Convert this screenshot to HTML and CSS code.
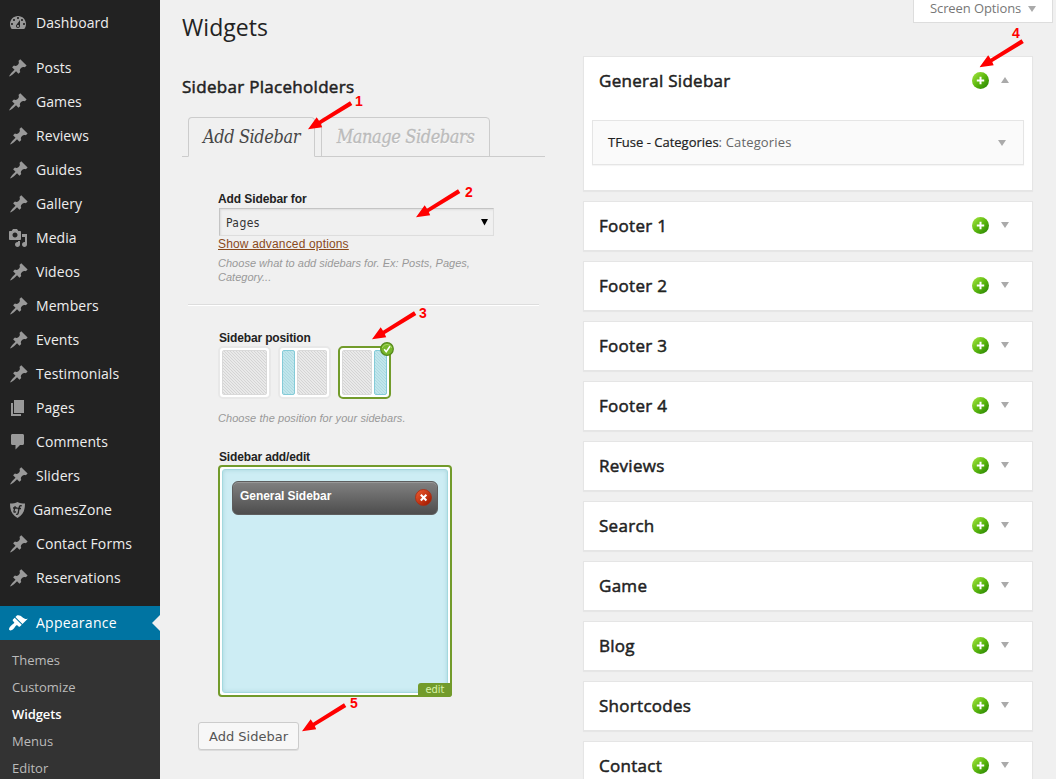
FILE: index.html
```html
<!DOCTYPE html>
<html lang="en">
<head>
<meta charset="utf-8">
<title>Widgets</title>
<link rel="stylesheet" href="styles.css">
</head>
<body>
<svg class="defs" width="0" height="0">
  <defs>
    <symbol id="pin" viewBox="0 0 20 20"><path d="M10.44 3.02l1.82-1.82 6.36 6.35-1.83 1.82c-1.05-.68-2.48-.57-3.41.36l-.75.75c-.92.93-1.04 2.35-.35 3.41l-1.83 1.82-2.41-2.41-2.8 2.79c-.42.42-3.38 2.71-3.8 2.29s1.86-3.39 2.28-3.81l2.79-2.79L4.1 9.36l1.83-1.82c1.05.69 2.48.57 3.4-.36l.75-.75c.93-.92 1.05-2.35.36-3.41z"/></symbol>
    <symbol id="dash" viewBox="0 0 20 20"><path fill-rule="evenodd" d="M3.76 16h12.48c1.1-1.37 1.76-3.11 1.76-5 0-4.42-3.58-8-8-8s-8 3.58-8 8c0 1.89.66 3.63 1.76 5zM10 4c.55 0 1 .45 1 1s-.45 1-1 1-1-.45-1-1 .45-1 1-1zM6 6c.55 0 1 .45 1 1s-.45 1-1 1-1-.45-1-1 .45-1 1-1zm8 0c.55 0 1 .45 1 1s-.45 1-1 1-1-.45-1-1 .45-1 1-1zm-5.37 5.55L12 7v6c0 1.1-.9 2-2 2s-2-.9-2-2c0-.57.24-1.08.63-1.45zM4 10c.55 0 1 .45 1 1s-.45 1-1 1-1-.45-1-1 .45-1 1-1zm12 0c.55 0 1 .45 1 1s-.45 1-1 1-1-.45-1-1 .45-1 1-1zm-5 3c0-.55-.45-1-1-1s-1 .45-1 1 .45 1 1 1 1-.45 1-1z"/></symbol>
    <symbol id="media" viewBox="0 0 20 20"><path fill-rule="evenodd" d="M13 11V4c0-.55-.45-1-1-1h-1.67L9 1H5L3.67 3H2c-.55 0-1 .45-1 1v7c0 .55.45 1 1 1h10c.55 0 1-.45 1-1zM7 4.5c1.38 0 2.5 1.12 2.5 2.5S8.38 9.5 7 9.5 4.5 8.38 4.5 7 5.62 4.5 7 4.5zM14 6h5v10.5c0 1.38-1.12 2.5-2.5 2.5S14 17.88 14 16.5s1.12-2.5 2.5-2.5c.17 0 .34.02.5.05V9h-3V6zm-4 8.05V13h2v3.5c0 1.38-1.12 2.5-2.5 2.5S7 17.88 7 16.5 8.12 14 9.5 14c.17 0 .34.02.5.05z"/></symbol>
    <symbol id="pages" viewBox="0 0 20 20"><path d="M6 15V2h10v13H6zm-1 1h8v2H3V5h2v11z"/></symbol>
    <symbol id="comment" viewBox="0 0 20 20"><path d="M4.5 2h10c.9 0 1.5.6 1.5 1.500v8c0 .9-.6 1.500-1.500 1.500H12l-4.500 4.600V13h-3C3.600 13 3 12.400 3 11.500v-8C3 2.600 3.600 2 4.500 2z"/></symbol>
    <symbol id="shield" viewBox="0 0 20 20"><path d="M2 3.500c3 0 5.500-.5 7.500-1.500 2 1 4.500 1.500 7.500 1.500 0 7-2 11.500-7.500 14.500C4 15 2 10.500 2 3.500z"/><path class="cut" d="M7.200 6.200L6 11.200c-.2 1.300.8 1.300 1.800.3M5 8h4.300M13.800 6c-1.500-.9-2.300 0-2.600 1.500L10.200 13c-.3 1.400-1.200 1.600-2 1.200M9.500 8.500H13"/></symbol>
    <symbol id="brush" viewBox="0 0 20 20"><path d="M14.480 11.060L7.410 3.990l1.500-1.500c.5-.56 2.300-.47 3.510.32 1.210.8 1.430 1.280 2.910 2.100 1.180.64 2.450 1.260 4.450.85zm-.71.71L6.700 4.700 4.930 6.470c-.39.39-.39 1.020 0 1.410l1.060 1.060c.39.39.39 1.030 0 1.420-.6.6-1.430 1.110-2.210 1.690-.35.26-.7.53-1.010.84C1.430 14.230.4 16.080 1.400 17.070c.99 1 2.840-.03 4.180-1.360.31-.31.58-.66.85-1.020.57-.78 1.080-1.610 1.690-2.210.39-.39 1.020-.39 1.410 0l1.060 1.060c.39.39 1.020.39 1.410 0z"/></symbol>
    <linearGradient id="greenFill" x1="0" y1="0" x2="1" y2="1"><stop offset=".1" stop-color="#9be03a"/><stop offset=".5" stop-color="#5db80e"/><stop offset=".9" stop-color="#2d8a05"/></linearGradient>
    <linearGradient id="redFill" x1="0" y1="0" x2="1" y2="1"><stop offset=".1" stop-color="#e8562c"/><stop offset=".9" stop-color="#a31a00"/></linearGradient>
    <symbol id="plus" viewBox="0 0 18 18"><circle cx="8.500" cy="8.500" r="8.500" fill="url(#greenFill)"/><path d="M8.500 4.800v7.400M4.800 8.500h7.400" stroke="#fff" stroke-width="2"/></symbol>
    <symbol id="arrow" viewBox="0 0 46 32"><path d="M0 29.200L8.700 17.200l2.300 3.600L42 1.200l2.300 3.900L12.800 24l1.400 3.200z" fill="#f00"/></symbol>
  </defs>
</svg>
<div class="page">
  <nav class="menu">
    <a class="item first"><svg class="icon"><use href="#dash"/></svg><span>Dashboard</span></a>
    <a class="item"><svg class="icon"><use href="#pin"/></svg><span>Posts</span></a>
    <a class="item"><svg class="icon"><use href="#pin"/></svg><span>Games</span></a>
    <a class="item custom"><svg class="icon"><use href="#pin"/></svg><span>Reviews</span></a>
    <a class="item custom"><svg class="icon"><use href="#pin"/></svg><span>Guides</span></a>
    <a class="item custom"><svg class="icon"><use href="#pin"/></svg><span>Gallery</span></a>
    <a class="item"><svg class="icon"><use href="#media"/></svg><span>Media</span></a>
    <a class="item custom"><svg class="icon"><use href="#pin"/></svg><span>Videos</span></a>
    <a class="item custom"><svg class="icon"><use href="#pin"/></svg><span>Members</span></a>
    <a class="item custom"><svg class="icon"><use href="#pin"/></svg><span>Events</span></a>
    <a class="item custom"><svg class="icon"><use href="#pin"/></svg><span>Testimonials</span></a>
    <a class="item"><svg class="icon"><use href="#pages"/></svg><span>Pages</span></a>
    <a class="item"><svg class="icon"><use href="#comment"/></svg><span>Comments</span></a>
    <a class="item custom"><svg class="icon"><use href="#pin"/></svg><span>Sliders</span></a>
    <a class="item theme"><svg class="icon"><use href="#shield"/></svg><span>GamesZone</span></a>
    <a class="item custom"><svg class="icon"><use href="#pin"/></svg><span>Contact Forms</span></a>
    <a class="item custom"><svg class="icon"><use href="#pin"/></svg><span>Reservations</span></a>
    <a class="item current"><svg class="icon"><use href="#brush"/></svg><span>Appearance</span></a>
    <div class="submenu"><a>Themes</a><a>Customize</a><a class="active">Widgets</a><a>Menus</a><a>Editor</a></div>
  </nav>
  <main class="content">
    <section class="left">
      <h1>Widgets</h1>
      <h2>Sidebar Placeholders</h2>
      <div class="tabs"><a class="tab on"><span>Add Sidebar</span></a><a class="tab off"><span>Manage Sidebars</span></a></div>
      <div class="field choose">
        <label>Add Sidebar for</label>
        <div class="select"><span>Pages</span><svg width="7" height="7"><path d="M0 0h7L3.500 6.500z"/></svg></div>
        <a class="advanced">Show advanced options</a>
        <p class="hint">Choose what to add sidebars for. Ex: Posts, Pages,<br>Category...</p>
      </div>
      <hr class="rule">
      <div class="field position">
        <label>Sidebar position</label>
        <div class="thumbs">
          <div class="thumb"><i class="hatch"></i></div>
          <div class="thumb"><i class="hatch blue"></i><i class="hatch"></i></div>
          <div class="thumb chosen"><i class="hatch"></i><i class="hatch blue"></i>
            <svg class="check" viewBox="0 0 14 14"><circle cx="7" cy="7" r="6.300" fill="#77b72b" stroke="#55881b" stroke-width="1.200"/><path d="M2.200 6a5 5 0 0 1 9.600 0" fill="none" stroke="#a5d55e"/><path d="M4.200 7.300l2 2.400L10 4.300" fill="none" stroke="#fff" stroke-width="1.500"/></svg>
          </div>
        </div>
        <p class="hint">Choose the position for your sidebars.</p>
      </div>
      <div class="field edit">
        <label>Sidebar add/edit</label>
        <div class="board">
          <div class="drop"><div class="chip"><span>General Sidebar</span><svg viewBox="0 0 17 17"><circle cx="8.500" cy="8.500" r="8" fill="url(#redFill)" stroke="#a92b10" stroke-width=".8"/><path d="M5.800 5.800l5.600 5.600m0-5.600l-5.600 5.600" stroke="#fff" stroke-width="2.100"/></svg></div></div>
          <span class="editTag">edit</span>
        </div>
      </div>
      <button class="add">Add Sidebar</button>
    </section>
    <section class="right">
      <article class="card open">
        <header><h3>General Sidebar</h3><svg class="plus"><use href="#plus"/></svg><i class="tri up"></i></header>
        <div class="widget"><span>TFuse - Categories<em>: Categories</em></span><i class="tri"></i></div>
      </article>
      <article class="card"><header><h3>Footer 1</h3><svg class="plus"><use href="#plus"/></svg><i class="tri"></i></header></article>
      <article class="card"><header><h3>Footer 2</h3><svg class="plus"><use href="#plus"/></svg><i class="tri"></i></header></article>
      <article class="card"><header><h3>Footer 3</h3><svg class="plus"><use href="#plus"/></svg><i class="tri"></i></header></article>
      <article class="card"><header><h3>Footer 4</h3><svg class="plus"><use href="#plus"/></svg><i class="tri"></i></header></article>
      <article class="card"><header><h3>Reviews</h3><svg class="plus"><use href="#plus"/></svg><i class="tri"></i></header></article>
      <article class="card"><header><h3>Search</h3><svg class="plus"><use href="#plus"/></svg><i class="tri"></i></header></article>
      <article class="card"><header><h3>Game</h3><svg class="plus"><use href="#plus"/></svg><i class="tri"></i></header></article>
      <article class="card"><header><h3>Blog</h3><svg class="plus"><use href="#plus"/></svg><i class="tri"></i></header></article>
      <article class="card"><header><h3>Shortcodes</h3><svg class="plus"><use href="#plus"/></svg><i class="tri"></i></header></article>
      <article class="card"><header><h3>Contact</h3><svg class="plus"><use href="#plus"/></svg><i class="tri"></i></header></article>
    </section>
  </main>
  <div class="screenOptions"><span>Screen Options</span><i class="tri"></i></div>
  <svg class="notes" width="1056" height="779">
    <use href="#arrow" x="308" y="100" width="46" height="32"/><text x="355" y="106">1</text>
    <use href="#arrow" x="416" y="188" width="46" height="32"/><text x="465" y="197">2</text>
    <use href="#arrow" x="372" y="310" width="46" height="32"/><text x="419" y="318">3</text>
    <use href="#arrow" x="979.500" y="38" width="46" height="32"/><text x="1012" y="38">4</text>
    <use href="#arrow" x="302" y="702" width="46" height="32"/><text x="350" y="708">5</text>
  </svg>
</div>
</body>
</html>
```
FILE: styles.css
```css
* { box-sizing: border-box; }
body { margin: 0; background: #f0f0f0; color: #222; font-family: "Open Sans", sans-serif; }
h1, h2, h3, p { margin: 0; }
.defs { position: absolute; }
.page { position: relative; display: flex; width: 1056px; height: 779px; overflow: hidden; }

.menu { width: 160px; flex: none; background: #222; padding-top: 6px; }
.item { position: relative; display: flex; align-items: center; height: 34px; padding-left: 8px; color: #eee; font-size: 14px; letter-spacing: .08px; }
.item span { padding-bottom: 2px; }
.item.first { margin-bottom: 11px; }
.icon { width: 20px; height: 20px; margin-right: 8px; fill: #999; flex: none; }
.cut { fill: none; stroke: #222; stroke-width: 1.3; }
.custom { padding-left: 9px; }
.custom .icon { margin-right: 7px; }
.theme .icon { margin-right: 5px; }
.current { margin-top: 11px; background: #0074a2; color: #fff; letter-spacing: .25px; }
.current .icon { fill: #fff; }
.current::after { content: ""; position: absolute; right: 0; top: 9px; border: 8px solid transparent; border-right-color: #f0f0f0; border-left: 0; }
.submenu { background: #333; padding-top: 7px; height: 140px; }
.submenu a { display: block; line-height: 27px; padding-left: 12px; font-size: 13px; color: #bbb; }
.submenu .active { color: #fff; font-weight: 600; letter-spacing: -.1px; }

.content { display: grid; grid-template-columns: 363px 450px; column-gap: 38px; padding-left: 22px; }
h1 { font-size: 23px; font-weight: 400; line-height: 30px; padding-top: 12px; letter-spacing: .05px; }
h2 { font-size: 17px; font-weight: 400; line-height: 24px; margin-top: 33px; letter-spacing: .3px; -webkit-text-stroke: .5px #222; }
.tabs { display: flex; gap: 6px; margin-top: 18px; height: 40px; padding-left: 6px; background: linear-gradient(#ccc, #ccc) 0 100% / 100% 1px no-repeat; }
.tab { display: flex; align-items: center; justify-content: center; height: 40px; padding-bottom: 1px; border: 1px solid #ccc; border-radius: 4px 4px 0 0; font: italic 18px "DejaVu Serif Condensed", "DejaVu Serif", serif; font-stretch: condensed; letter-spacing: -.4px; white-space: nowrap; }
.tab.on { width: 127px; background: #f0f0f0; border-bottom-color: #f0f0f0; color: #464646; }
.tab.off { width: 169px; color: #bbb; text-shadow: 0 1px 0 #fff; -webkit-text-stroke: .3px #bbb; }

.field { padding-left: 36px; font-family: "Liberation Sans", sans-serif; }
label { display: block; font-size: 12px; font-weight: bold; line-height: 16px; letter-spacing: -.15px; }
.choose { margin-top: 34px; }
.select { display: flex; align-items: center; justify-content: space-between; width: 275px; height: 28px; margin: 1px 0 0 1px; padding: 0 5px 0 6px; border: 1px solid #ddd; border-top-color: #c4c4c4; border-left-color: #c4c4c4; box-shadow: inset 1px 1px 2px #ddd; font: 12px "DejaVu Sans Condensed", "DejaVu Sans", sans-serif; font-stretch: condensed; letter-spacing: .4px; color: #333; }
.select span { padding-top: 2px; }
.choose label { letter-spacing: -.1px; }
.advanced { display: block; margin-top: 1px; font-size: 12px; line-height: 15px; letter-spacing: .16px; color: #8a4a1c; text-decoration: underline; }
.hint { font-size: 11px; font-style: italic; line-height: 14px; letter-spacing: .02px; color: #999; }
.choose .hint { margin-top: 4px; }
.rule { width: 351px; height: 2px; margin: 20px 0 0 6px; border: 0; border-top: 1px solid #ddd; background: #fff; }
.position { margin-top: 24px; }
.position label, .edit label { padding-left: 1px; }
.thumbs { display: flex; gap: 7px; }
.thumb { position: relative; display: flex; gap: 2px; width: 53px; height: 53px; padding: 2px; border: 2px solid #e8e8e8; border-radius: 5px; background: #fff; }
.chosen { border-color: #729b2b; }
.hatch { flex: 1; border: 1px solid #d9d9d9; border-radius: 2px; background: repeating-linear-gradient(45deg, #e9e9e9 0 1.400px, #d4d4d4 1.400px 2.100px); }
.blue { flex: none; width: 13px; border-color: #84cbd8; background: repeating-linear-gradient(45deg, #c0e6ec 0 1.400px, #add9e1 1.400px 2.100px); }
.check { position: absolute; right: -5px; top: -6px; width: 14px; height: 14px; }
.position .hint { margin-top: 12px; letter-spacing: .06px; }
.edit { margin-top: 24px; }
.board { position: relative; width: 234px; height: 232px; padding: 2px; border: 2px solid #729b2b; border-radius: 4px; background: #fff; }
.drop { height: 100%; padding: 11px 9px; border: 1px solid #a4d9df; border-radius: 3px; background: #cdedf4; box-shadow: inset 0 0 4px #a9d5db; }
.chip { display: flex; justify-content: space-between; align-items: center; width: 206px; height: 34px; padding: 0 5px 0 7px; border: 1px solid #5e5e5e; border-radius: 6px; background: linear-gradient(#818181, #4d4d4d); box-shadow: inset 0 1px #989898; color: #fff; font-size: 12px; font-weight: bold; letter-spacing: -.05px; }
.chip span { margin-top: -4px; }
.chip svg { width: 17px; height: 17px; margin-top: -1px; }
.editTag { position: absolute; right: -2px; bottom: -2px; width: 34px; height: 14px; border-radius: 3px 0 3px 0; background: #729b2b; color: #d9f4a8; font: 11px/14px "DejaVu Sans Condensed", "DejaVu Sans", sans-serif; text-align: center; }
.add { display: block; width: 101px; height: 28px; margin: 25px 0 0 16px; padding: 0; border: 1px solid #ccc; border-radius: 3px; background: #f7f7f7; box-shadow: 0 1px 0 #ddd; font: 13px "DejaVu Sans", sans-serif; color: #555; }

.right { display: flex; flex-direction: column; gap: 10px; padding-top: 56px; }
.card { flex: none; height: 50px; border: 1px solid #e5e5e5; background: #fff; box-shadow: 0 1px 1px rgba(0,0,0,.04); }
.open { height: 135px; }
.card header { display: flex; align-items: center; height: 48px; padding: 0 23px 0 15px; }
h3 { flex: 1; padding-bottom: 2px; font-size: 17px; font-weight: 400; letter-spacing: .28px; -webkit-text-stroke: .5px #222; }
.plus { width: 18px; height: 18px; margin-right: 11px; }
.tri { width: 0; height: 0; border: 4px solid transparent; border-top: 6px solid #aaa; border-bottom: 0; }
.tri.up { border-top: 0; border-bottom: 6px solid #aaa; }
header .tri { margin-top: -3px; }
.widget { display: flex; justify-content: space-between; align-items: center; margin: 15px 8px 0; height: 45px; padding: 0 17px 0 15px; border: 1px solid #e5e5e5; background: #fafafa; box-shadow: 0 1px 1px rgba(0,0,0,.04); font-size: 13px; -webkit-text-stroke: .2px #222; }
.widget span { padding-bottom: 2px; }
.widget em { font-style: normal; letter-spacing: .15px; color: #666; -webkit-text-stroke: 0; }
.screenOptions { position: absolute; left: 913px; top: -6px; display: flex; gap: 7px; align-items: center; width: 140px; height: 29px; padding-left: 16px; border: 1px solid #ddd; background: #fff; color: #777; font-size: 13px; letter-spacing: -.1px; }
.screenOptions span { padding-bottom: 1px; }
.notes { position: absolute; left: 0; top: 0; pointer-events: none; }
.notes text { fill: #f00; font: bold 14px "Liberation Sans", sans-serif; }
```
